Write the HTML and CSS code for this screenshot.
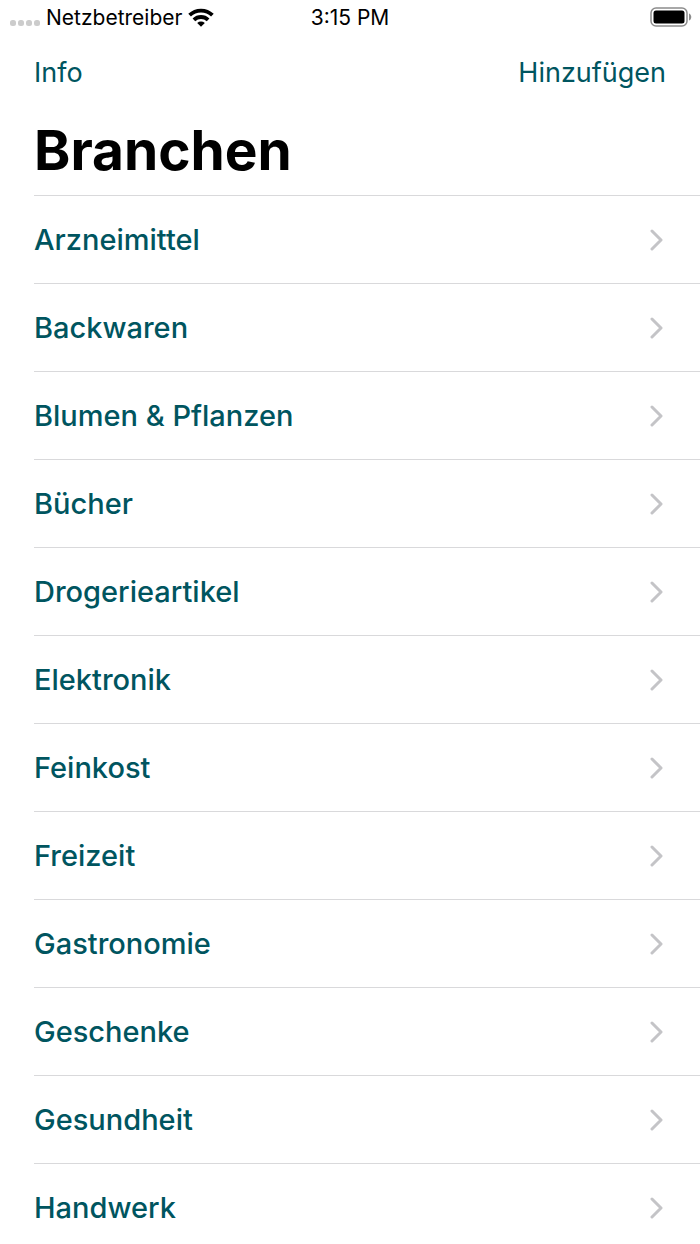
FILE: index.html
```html
<!DOCTYPE html>
<html lang="de">
<head>
    <meta charset="UTF-8">
    <meta name="viewport" content="width=device-width, initial-scale=1.0">
    <title>Branchen</title>
    <link rel="stylesheet" href="styles.css">
</head>
<body>

<div class="screen">
    <!-- Status bar -->
    <div class="status-bar">
        <div class="carrier">
            <svg class="signal" width="30" height="6" viewBox="0 0 30 6" fill="#cccccc">
                <rect x="0" y="0" width="6" height="6" rx="2.5"/>
                <rect x="8" y="0" width="6" height="6" rx="2.5"/>
                <rect x="16" y="0" width="6" height="6" rx="2.5"/>
                <rect x="24" y="0" width="6" height="6" rx="2.5"/>
            </svg>
            <span>Netzbetreiber</span>
            <svg class="wifi" width="26" height="19" viewBox="0 0 26 19" fill="none" stroke="#000" stroke-width="3.8">
                <path d="M1.6 7.2A16.3 16.3 0 0 1 24.4 7.2"/>
                <path d="M5.9 11.9A10.2 10.2 0 0 1 20.1 11.9"/>
                <path d="M13 18.8L9.2 15A5.6 5.6 0 0 1 16.8 15Z" fill="#000" stroke="none"/>
            </svg>
        </div>
        <span class="time">3:15 PM</span>
        <svg class="battery" width="42" height="20" viewBox="0 0 42 20">
            <rect x="1" y="1" width="36" height="18" rx="5" fill="none" stroke="#8c8c8c" stroke-width="1.5"/>
            <rect x="3.5" y="3.5" width="31" height="13" rx="2.5" fill="#000"/>
            <path d="M39 6.5C42 7.5 42 12.5 39 13.5Z" fill="#8c8c8c"/>
        </svg>
    </div>

    <!-- Navigation -->
    <nav class="nav-bar">
        <button type="button" class="nav-button">Info</button>
        <button type="button" class="nav-button">Hinzufügen</button>
    </nav>

    <h1>Branchen</h1>

    <ul class="list">
        <li><a href="#arzneimittel">Arzneimittel<svg class="chevron" viewBox="0 0 14 22"><path d="M2 2L11 11L2 20"/></svg></a></li>
        <li><a href="#backwaren">Backwaren<svg class="chevron" viewBox="0 0 14 22"><path d="M2 2L11 11L2 20"/></svg></a></li>
        <li><a href="#blumen">Blumen &amp; Pflanzen<svg class="chevron" viewBox="0 0 14 22"><path d="M2 2L11 11L2 20"/></svg></a></li>
        <li><a href="#buecher">Bücher<svg class="chevron" viewBox="0 0 14 22"><path d="M2 2L11 11L2 20"/></svg></a></li>
        <li><a href="#drogerieartikel">Drogerieartikel<svg class="chevron" viewBox="0 0 14 22"><path d="M2 2L11 11L2 20"/></svg></a></li>
        <li><a href="#elektronik">Elektronik<svg class="chevron" viewBox="0 0 14 22"><path d="M2 2L11 11L2 20"/></svg></a></li>
        <li><a href="#feinkost">Feinkost<svg class="chevron" viewBox="0 0 14 22"><path d="M2 2L11 11L2 20"/></svg></a></li>
        <li><a href="#freizeit">Freizeit<svg class="chevron" viewBox="0 0 14 22"><path d="M2 2L11 11L2 20"/></svg></a></li>
        <li><a href="#gastronomie">Gastronomie<svg class="chevron" viewBox="0 0 14 22"><path d="M2 2L11 11L2 20"/></svg></a></li>
        <li><a href="#geschenke">Geschenke<svg class="chevron" viewBox="0 0 14 22"><path d="M2 2L11 11L2 20"/></svg></a></li>
        <li><a href="#gesundheit">Gesundheit<svg class="chevron" viewBox="0 0 14 22"><path d="M2 2L11 11L2 20"/></svg></a></li>
        <li><a href="#handwerk">Handwerk<svg class="chevron" viewBox="0 0 14 22"><path d="M2 2L11 11L2 20"/></svg></a></li>
    </ul>
</div>

</body>
</html>
```
FILE: styles.css
```css
body {
    font-family: Inter, "Liberation Sans", sans-serif;
    margin: 0;
    padding: 0;
    background-color: #fff;
    color: #000;
}

.screen {
    height: 100vh;
    overflow: hidden;
}

.status-bar {
    display: grid;
    grid-template-columns: 1fr auto 1fr;
    align-items: center;
    height: 34px;
    padding: 0 8px;
    font-size: 21px;
    font-weight: 400;
}

.carrier {
    display: flex;
    align-items: center;
    gap: 6px;
    padding-left: 2px;
}

.signal {
    margin-top: 12px;
}

.battery {
    justify-self: end;
}

.nav-bar {
    display: flex;
    justify-content: space-between;
    align-items: center;
    height: 76px;
    padding: 0 34px;
}

.nav-button {
    border: none;
    padding: 0;
    background: none;
    color: #00555f;
    font-family: inherit;
    font-size: 27px;
    cursor: pointer;
}

h1 {
    margin: 0;
    padding: 0 34px 5px;
    font-size: 55px;
    line-height: 80px;
    font-weight: 700;
}

.list {
    list-style: none;
    margin: 0;
    padding: 0 0 0 34px;
}

.list a {
    display: flex;
    justify-content: space-between;
    align-items: center;
    height: 87px;
    padding-right: 36px;
    border-top: 1px solid #d9d9db;
    color: #00555f;
    font-size: 29px;
    font-weight: 500;
    text-decoration: none;
}

.chevron {
    width: 14px;
    height: 22px;
    fill: none;
    stroke: #c4c4c7;
    stroke-width: 3;
    stroke-linecap: round;
    stroke-linejoin: round;
}
```
